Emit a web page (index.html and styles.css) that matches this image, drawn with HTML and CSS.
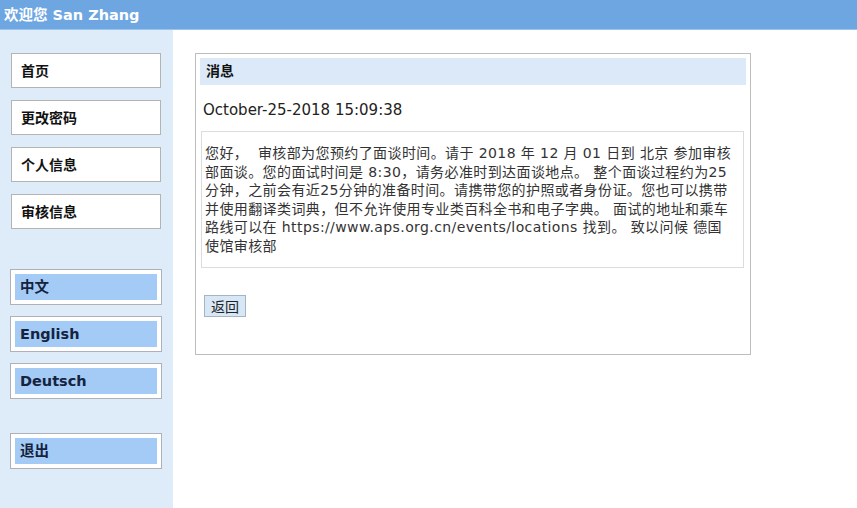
FILE: index.html
```html
<!DOCTYPE html>
<html lang="zh">

<head>
    <meta charset="UTF-8">
    <title>消息</title>
    <link rel="stylesheet" href="styles.css">
</head>

<body>
    <div class="topbar">欢迎您 San Zhang</div>
    <div class="layout">
        <div class="sidebar">
            <div class="nav">
                <a class="nav-item" href="#">首页</a>
                <a class="nav-item" href="#">更改密码</a>
                <a class="nav-item" href="#">个人信息</a>
                <a class="nav-item" href="#">审核信息</a>
            </div>
            <div class="lang">
                <a class="lang-item" href="#"><span>中文</span></a>
                <a class="lang-item" href="#"><span>English</span></a>
                <a class="lang-item" href="#"><span>Deutsch</span></a>
            </div>
            <a class="lang-item logout" href="#"><span>退出</span></a>
        </div>
        <div class="main">
            <div class="panel">
                <div class="panel-title">消息</div>
                <div class="date">October-25-2018 15:09:38</div>
                <div class="message">
                    您好，&nbsp; 审核部为您预约了面谈时间。请于 2018 年 12 月 01 日到 北京 参加审核部面谈。您的面试时间是 8:30，请务必准时到达面谈地点。 整个面谈过程约为25分钟，之前会有近25分钟的准备时间。请携带您的护照或者身份证。您也可以携带并使用翻译类词典，但不允许使用专业类百科全书和电子字典。 面试的地址和乘车路线可以在 https://www.aps.org.cn/events/locations 找到。 致以问候 德国使馆审核部
                </div>
                <button class="back">返回</button>
            </div>
        </div>
    </div>
</body>

</html>
```

FILE: styles.css
```css
body {
    margin: 0;
    font-family: "DejaVu Sans", "Noto Sans CJK SC", sans-serif;
    font-size: 14px;
    color: #222;
    background: #fff;
}

.topbar {
    height: 30px;
    line-height: 30px;
    padding-left: 4px;
    background: #6ea6e2;
    border-bottom: 1px solid #9cc3ec;
    color: #fff;
    font-weight: bold;
    font-size: 14.5px;
    box-sizing: border-box;
}

.layout {
    display: flex;
    min-height: calc(100vh - 30px);
}

.sidebar {
    width: 173px;
    background: #deebf8;
    padding: 23px 0 0 11px;
    box-sizing: border-box;
}

.nav {
    display: flex;
    flex-direction: column;
    gap: 12px;
}

.nav-item {
    display: block;
    width: 150px;
    height: 35px;
    line-height: 35px;
    padding-left: 9px;
    box-sizing: border-box;
    background: #fff;
    border: 1px solid #b4b4b4;
    color: #111;
    font-weight: bold;
    text-decoration: none;
}

.lang {
    display: flex;
    flex-direction: column;
    gap: 11px;
    margin-top: 40px;
}

.lang-item {
    display: block;
    width: 152px;
    height: 36px;
    margin-left: -1px;
    padding: 4px;
    box-sizing: border-box;
    background: #fff;
    border: 1px solid #b0b0b8;
    text-decoration: none;
}

.lang-item span {
    display: block;
    height: 26px;
    line-height: 26px;
    padding-left: 5px;
    background: #a4cbf5;
    color: #15233f;
    font-weight: bold;
    font-size: 14.5px;
}

.logout {
    margin-top: 34px;
}

.main {
    flex: 1;
    padding: 23px 0 0 22px;
}

.panel {
    width: 556px;
    height: 302px;
    padding: 4px;
    box-sizing: border-box;
    border: 1px solid #bdbdbd;
}

.panel-title {
    height: 27px;
    line-height: 27px;
    padding-left: 6px;
    background: #dce9f8;
    font-weight: bold;
    color: #111;
}

.date {
    margin: 16px 0 0 3px;
    font-size: 15px;
    line-height: 19px;
    color: #222;
}

.message {
    margin: 11px 2px 0 1px;
    padding: 12px 10px 12px 3px;
    border: 1px solid #dcdcdc;
    font-size: 14px;
    letter-spacing: 0.4px;
    line-height: 18.5px;
    color: #333;
}

.back {
    margin: 27px 0 0 4px;
    height: 22px;
    padding: 0 6px;
    background: #d8e7f6;
    border: 1px solid #a2b5c8;
    font-family: "DejaVu Sans", "Noto Sans CJK SC", sans-serif;
    font-size: 14px;
    color: #222;
}
```
